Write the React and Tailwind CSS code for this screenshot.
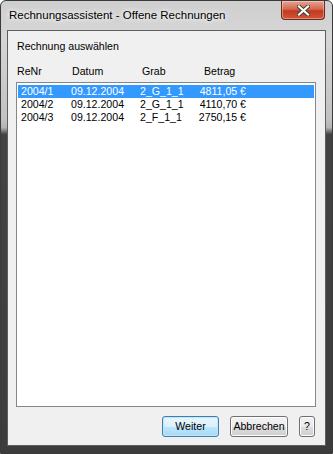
import React from 'react';

const ROWS = [
    { nr: '2004/1', datum: '09.12.2004', grab: '2_G_1_1', betrag: '4811,05 €' },
    { nr: '2004/2', datum: '09.12.2004', grab: '2_G_1_1', betrag: '4110,70 €' },
    { nr: '2004/3', datum: '09.12.2004', grab: '2_F_1_1', betrag: '2750,15 €' },
];

const font = { fontFamily: '"Liberation Sans", Arial, sans-serif' };

const App = () => {
    const selected = 0;

    return (
        <div className="w-[333px] h-[454px] bg-white" style={font}>
            {/* Window frame */}
            <div className="w-[333px] h-[454px] flex flex-col border border-[#3a3a3a] rounded-t-[6px] bg-[linear-gradient(to_bottom,#cfcfcf_0%,#d6d6d6_8%,#c2c2c2_26%,#b4b4b4_28%,#434343_29.5%,#3c3c3c_100%)]">
                {/* Title bar */}
                <div className="h-[29px] flex items-start shrink-0">
                    <div className="pl-[8px] pt-[7px] text-[11.5px] leading-[15px] text-black [text-shadow:0_0_8px_#ffffff,0_0_4px_#ffffff]">
                        Rechnungsassistent - Offene Rechnungen
                    </div>
                    <div className="ml-auto mr-[7px] w-[44px] h-[19px] rounded-b-[4px] border border-t-0 border-[#6b2a20] bg-[linear-gradient(to_bottom,#e8a391_0%,#d4684f_45%,#c13a1e_55%,#d2563a_100%)] flex items-center justify-center shadow-[inset_0_0_0_1px_rgba(255,255,255,0.35)]">
                        <svg width="13" height="11" viewBox="0 0 13 11">
                            <path d="M2 1.5 L11 9.5 M11 1.5 L2 9.5" stroke="#3a3a3a" strokeWidth="4" strokeLinecap="square" />
                            <path d="M2 1.5 L11 9.5 M11 1.5 L2 9.5" stroke="#ffffff" strokeWidth="2.2" strokeLinecap="square" />
                        </svg>
                    </div>
                </div>

                {/* Client area */}
                <div className="mx-[6px] mb-[7px] flex-1 border border-[#5e5e5e] bg-[#f0f0f0] flex flex-col text-[10.6px] leading-[13px] text-black">
                    <div className="pl-[9px] pt-[9px]">Rechnung auswählen</div>

                    <div className="flex pl-[9px] mt-[12px]">
                        <div className="w-[55px]">ReNr</div>
                        <div className="w-[70px]">Datum</div>
                        <div className="w-[62px]">Grab</div>
                        <div>Betrag</div>
                    </div>

                    {/* List */}
                    <div className="ml-[8px] mt-[4px] w-[300px] h-[325px] border border-[#828790] bg-white px-[1px] pt-[2px]">
                        {ROWS.map((r, i) => (
                            <div
                                key={r.nr}
                                className={`flex h-[13px] ${i === selected ? 'bg-[#3399ff] text-white' : 'text-black'}`}
                            >
                                <div className="w-[53px] pl-[3px]">{r.nr}</div>
                                <div className="w-[69px]">{r.datum}</div>
                                <div className="w-[50px]">{r.grab}</div>
                                <div className="w-[56px] text-right">{r.betrag}</div>
                            </div>
                        ))}
                    </div>

                    {/* Buttons */}
                    <div className="flex justify-end gap-[11px] pr-[10px] mt-[9px]">
                        <button className="w-[57px] h-[21px] rounded-[3px] border border-[#3c7fb1] bg-[linear-gradient(to_bottom,#eaf6fd_0%,#d9f0fc_50%,#bee6fd_51%,#a7d9f5_100%)] shadow-[inset_0_0_0_1px_#c4e5f6] text-[10.6px] leading-[13px]">
                            Weiter
                        </button>
                        <button className="w-[58px] h-[21px] rounded-[3px] border border-[#707070] bg-[linear-gradient(to_bottom,#f2f2f2_0%,#ebebeb_50%,#dddddd_51%,#cfcfcf_100%)] shadow-[inset_0_0_0_1px_#fcfcfc] text-[10.6px] leading-[13px]">
                            Abbrechen
                        </button>
                        <button className="w-[16px] h-[21px] rounded-[3px] border border-[#707070] bg-[linear-gradient(to_bottom,#f2f2f2_0%,#ebebeb_50%,#dddddd_51%,#cfcfcf_100%)] shadow-[inset_0_0_0_1px_#fcfcfc] text-[10.6px] leading-[13px]">
                            ?
                        </button>
                    </div>
                </div>
            </div>
        </div>
    );
};

export default App;
